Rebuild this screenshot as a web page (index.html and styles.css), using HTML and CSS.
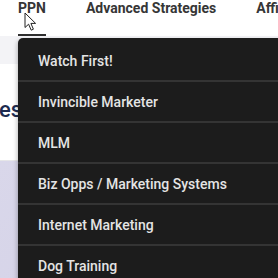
FILE: index.html
```html
<!DOCTYPE html>
<html>
<head>
<meta charset="utf-8">
<link rel="stylesheet" href="styles.css">
</head>
<body>
<div class="page">
  <nav class="topnav">
    <a class="navlink active">PPN</a>
    <a class="navlink">Advanced Strategies</a>
    <a class="navlink">Affiliate</a>
  </nav>
  <div class="band"></div>
  <section class="hero">
    <h1 class="title">esses Online</h1>
  </section>
  <section class="lav"></section>

  <ul class="menu">
    <li class="item first">Watch First!</li>
    <li class="item">Invincible Marketer</li>
    <li class="item">MLM</li>
    <li class="item">Biz Opps / Marketing Systems</li>
    <li class="item">Internet Marketing</li>
    <li class="item">Dog Training</li>
  </ul>

  <svg class="cursor" width="13" height="20" viewBox="0 0 13 20">
    <path d="M1 1 L1 15.5 L4.6 12.2 L7.2 18.2 L9.4 17.2 L6.9 11.4 L11.6 11.4 Z" fill="#fff" stroke="#222" stroke-width="1" stroke-linejoin="round"/>
  </svg>
</div>
</body>
</html>
```

FILE: styles.css
```css
* { box-sizing: border-box; }
html, body { margin: 0; padding: 0; }
body {
  width: 278px;
  height: 278px;
  overflow: hidden;
  background: #fff;
  font-family: Roboto, "Liberation Sans", Arial, sans-serif;
}
.page {
  position: relative;
  width: 278px;
  height: 278px;
  overflow: hidden;
}
.topnav {
  display: flex;
  gap: 40px;
  height: 36px;
  padding-left: 18px;
  background: #fff;
  white-space: nowrap;
}
.navlink {
  display: block;
  height: 36px;
  padding-top: 1px;
  font-size: 14px;
  line-height: 14px;
  font-weight: 700;
  color: #363636;
  border-bottom: 2px solid transparent;
}
.navlink.active {
  border-bottom-color: #2f2f2f;
}
.band {
  height: 28px;
  background: #f3f3f6;
}
.hero {
  height: 97px;
  background: #fff;
  border-bottom: 1px solid #e6e6e8;
  padding-top: 34px;
  overflow: hidden;
}
.title {
  margin: 0 0 0 -1px;
  font-size: 22px;
  line-height: 24px;
  font-weight: 500;
  color: #1d2b4f;
  white-space: nowrap;
}
.lav {
  height: 117px;
  background: linear-gradient(135deg, #d9d7ea 0%, #d2d0e6 100%);
}
.menu {
  position: absolute;
  left: 18px;
  top: 38px;
  width: 300px;
  margin: 0;
  padding: 3px 0 0;
  list-style: none;
  background: #1c1c1c;
  border-top-left-radius: 5px;
  box-shadow: -1px 2px 4px rgba(0,0,0,0.25);
}
.item {
  height: 41px;
  padding-left: 20px;
  display: flex;
  align-items: center;
  font-size: 14px;
  font-weight: 500;
  color: #e4e4e4;
  border-bottom: 2px solid #343434;
  white-space: nowrap;
}
.item.first {
  height: 41px;
}
.cursor {
  position: absolute;
  left: 24px;
  top: 12px;
}
```
